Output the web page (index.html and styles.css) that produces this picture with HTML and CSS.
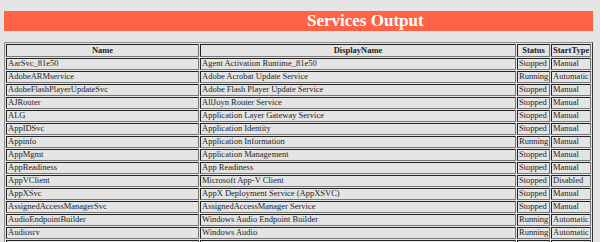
FILE: index.html
```html
<!DOCTYPE html>
<html>
<head>
<meta charset="utf-8">
<link rel="stylesheet" href="styles.css">
</head>
<body>
<h1 class="title">Services Output</h1>
<table class="svc">
<tr><th class="c-name">Name</th><th class="c-disp">DisplayName</th><th class="c-status">Status</th><th class="c-type">StartType</th></tr>
<tr><td>AarSvc_81e50</td><td>Agent Activation Runtime_81e50</td><td>Stopped</td><td>Manual</td></tr>
<tr><td>AdobeARMservice</td><td>Adobe Acrobat Update Service</td><td>Running</td><td>Automatic</td></tr>
<tr><td>AdobeFlashPlayerUpdateSvc</td><td>Adobe Flash Player Update Service</td><td>Stopped</td><td>Manual</td></tr>
<tr><td>AJRouter</td><td>AllJoyn Router Service</td><td>Stopped</td><td>Manual</td></tr>
<tr><td>ALG</td><td>Application Layer Gateway Service</td><td>Stopped</td><td>Manual</td></tr>
<tr><td>AppIDSvc</td><td>Application Identity</td><td>Stopped</td><td>Manual</td></tr>
<tr><td>Appinfo</td><td>Application Information</td><td>Running</td><td>Manual</td></tr>
<tr><td>AppMgmt</td><td>Application Management</td><td>Stopped</td><td>Manual</td></tr>
<tr><td>AppReadiness</td><td>App Readiness</td><td>Stopped</td><td>Manual</td></tr>
<tr><td>AppVClient</td><td>Microsoft App-V Client</td><td>Stopped</td><td>Disabled</td></tr>
<tr><td>AppXSvc</td><td>AppX Deployment Service (AppXSVC)</td><td>Stopped</td><td>Manual</td></tr>
<tr><td>AssignedAccessManagerSvc</td><td>AssignedAccessManager Service</td><td>Stopped</td><td>Manual</td></tr>
<tr><td>AudioEndpointBuilder</td><td>Windows Audio Endpoint Builder</td><td>Running</td><td>Automatic</td></tr>
<tr><td>Audiosrv</td><td>Windows Audio</td><td>Running</td><td>Automatic</td></tr>
<tr><td>autotimesvc</td><td>Cellular Time</td><td>Stopped</td><td>Manual</td></tr>
</table>
</body>
</html>
```

FILE: styles.css
```css
html { background: #e4e4e4; }
body {
  margin: 0;
  padding: 11px 7px 0 4px;
  font-family: "Liberation Serif", "Times New Roman", serif;
  color: #1e1e1e;
}
.title {
  margin: 0 0 11px 0;
  padding-left: 303px;
  background: #ff6347;
  color: #fff;
  text-align: left;
  font-size: 17px;
  line-height: 20px;
  height: 20px;
  font-weight: bold;
}
.svc {
  width: 589px;
  box-sizing: border-box;
  table-layout: fixed;
  border-collapse: separate;
  border-spacing: 1px;
  border: 1px outset #8a8a8a;
  font-size: 8.5px;
}
.svc th, .svc td {
  box-sizing: border-box;
  border: 1px inset #777;
  padding: 0 1px 1px 1px;
  line-height: 9px;
  height: 12px;
  white-space: nowrap;
  overflow: hidden;
  text-align: left;
}
.svc th {
  text-align: center;
  font-weight: bold;
  line-height: 11px;
  padding-bottom: 0;
  height: 13px;
}
.svc th.c-name { width: 193px; }
.svc th.c-disp { width: 316px; }
.svc th.c-status { width: 33px; }
.svc th.c-type { width: 40px; }
```
